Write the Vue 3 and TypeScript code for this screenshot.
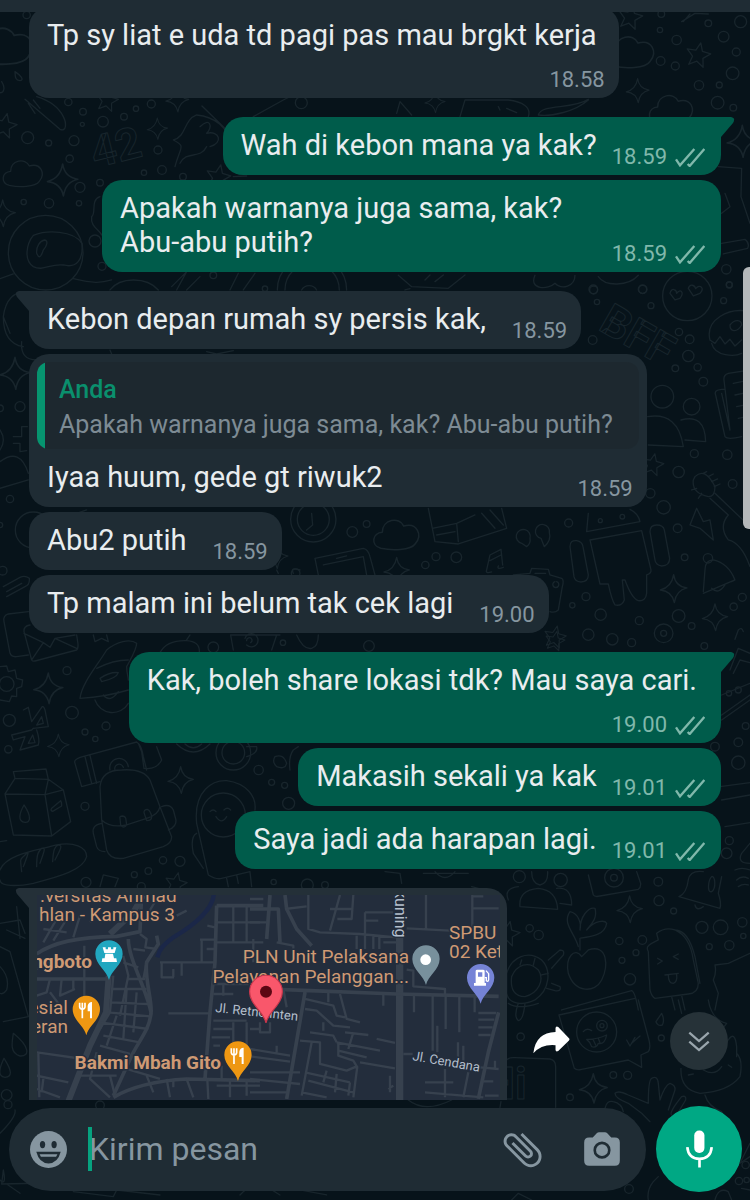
<script setup lang="ts">
import { ref } from 'vue'

interface Message {
  id: number
  out: boolean
  text: string
  time: string
  first?: boolean
  tail?: boolean
  stacked?: boolean
  wide?: boolean
  quote?: { author: string; text: string }
}

const draft = ref('')

const messages: Message[] = [
  { id: 1, out: false, text: 'Tp sy liat e uda td pagi pas mau brgkt kerja', time: '18.58', stacked: true },
  { id: 2, out: true, text: 'Wah di kebon mana ya kak?', time: '18.59', first: true, tail: true },
  { id: 3, out: true, text: 'Apakah warnanya juga sama, kak?\nAbu-abu putih?', time: '18.59', wide: true },
  { id: 4, out: false, text: 'Kebon depan rumah sy persis kak,', time: '18.59', first: true, tail: true },
  {
    id: 5,
    out: false,
    text: 'Iyaa huum, gede gt riwuk2',
    time: '18.59',
    quote: { author: 'Anda', text: 'Apakah warnanya juga sama, kak? Abu-abu putih?' },
  },
  { id: 6, out: false, text: 'Abu2 putih', time: '18.59' },
  { id: 7, out: false, text: 'Tp malam ini belum tak cek lagi', time: '19.00' },
  { id: 8, out: true, text: 'Kak, boleh share lokasi tdk? Mau saya cari.', time: '19.00', first: true, tail: true, stacked: true },
  { id: 9, out: true, text: 'Makasih sekali ya kak', time: '19.01' },
  { id: 10, out: true, text: 'Saya jadi ada harapan lagi.', time: '19.01' },
]

const pinPath = 'M0 78C-6 50-41 32-41 0a41 41 0 1 1 82 0C41 32 6 50 0 78z'
const sparkPath = 'M0-40Q5-6 38-2Q7 5 2 40Q-5 7-38 4Q-6-4 0-40z'
const starPath = 'M0-36L10-12L36-10L16 8L22 34L0 20L-22 34L-16 8L-36-10L-10-12z'
const cloudPath = 'M-44 34C-72 26-66-6-40-8C-40-42 4-50 16-24C50-34 66-2 46 22C34 40-16 40-44 34z'

interface Tile {
  x: number
  y: number
  dots: number[][]
  sparks: number[][]
  stars: number[][]
  clouds: number[][]
  lines: string[]
}

const tiles: Tile[] = [
  {
    x: 0,
    y: 0,
    dots: [[249, 335, 10], [309, 365, 16], [372, 350, 10], [408, 326, 8], [454, 312, 12], [247, 373, 6], [205, 306, 11], [83, 413, 18], [146, 429, 9], [222, 422, 15], [209, 476, 11], [474, 450, 12], [432, 518, 8], [486, 510, 13], [549, 530, 10], [240, 562, 15], [300, 548, 10], [147, 610, 14], [237, 610, 8], [71, 606, 8], [285, 723, 18], [306, 799, 12], [80, 45, 11], [904, 308, 18], [640, 826, 10], [795, 866, 8], [137, 758, 112]],
    sparks: [[188, 540, 1.2], [472, 386, 0.8], [532, 300, 0.9], [8, 640, 1]],
    stars: [[14, 376, 1], [322, 300, 0.9], [655, 530, 1]],
    clouds: [[20, 140, 1.4], [72, 522, 1]],
    lines: [
      'M100 706C140 690 220 690 246 730C250 780 230 805 190 795C150 790 130 815 100 800C70 780 80 730 100 706z',
      'M110 760C108 740 120 722 134 720C146 722 140 740 130 750C122 775 116 775 110 760z',
      'M75 298L180 388C200 396 200 370 190 350C170 310 130 296 110 290M85 310L105 340M100 300L120 325',
      'M525 500C540 440 560 440 520 420C560 410 550 360 590 345C640 350 690 380 690 440M606 318L680 390M600 380C630 350 640 380 620 400C660 390 670 430 630 440M540 490C560 450 600 480 620 440',
      'M0 836L40 822M220 836C280 850 300 850 335 840M330 870C360 830 440 830 475 870M515 860L560 815L530 870M560 870L600 830M690 870L715 820M730 870L765 820',
      'M832 870A100 100 0 0 1 1040 870M855 870A80 80 0 0 1 1018 870M905 870A26 26 0 0 1 950 870',
      'M300 590C270 600 290 640 275 650C270 680 300 690 305 705',
      'M45 215C60 225 75 240 60 242C44 240 46 228 45 215zM5 245C18 265 10 280 0 278M760 350L850 300L870 290M700 530L740 528',
    ],
  },
  {
    x: 375,
    y: 0,
    dots: [[859, 42, 10], [855, 90, 8], [905, 120, 14], [1000, 70, 10], [1097, 65, 18], [1046, 110, 16], [1084, 156, 12], [1073, 220, 19], [972, 256, 14], [1033, 255, 9], [1028, 308, 19], [1075, 323, 10], [857, 183, 13], [901, 198, 12], [1054, 808, 14], [803, 868, 13], [656, 870, 12], [1063, 855, 9], [937, 888, 74]],
    sparks: [[788, 272, 0.9], [1102, 424, 1.2], [180, 306, 0.8]],
    stars: [[766, 50, 1], [970, 164, 1]],
    clouds: [[770, 158, 1.2], [892, 330, 1.1]],
    lines: [
      'M920 65L960 40L1000 42M945 42L925 65M460 350C470 320 440 305 400 300L270 300L255 350M490 345C500 310 590 330 640 298M490 345C530 350 600 335 640 300M370 320L375 330M395 325L425 338M65 340L75 305L110 345',
      'M1030 500L1100 505L1098 590L1125 670M1040 640L1065 620L1050 580M1040 730L1110 718Q1125 730 1118 745L1045 762',
      'M70 826L110 860L220 865L270 825M90 870L105 866M150 840L165 825M180 845L205 825M480 826C460 870 520 870 540 850C560 870 600 860 600 826M670 830C690 860 760 860 790 826',
      'M885 880C890 860 905 870 905 880C915 865 930 875 915 895L900 900zM940 865C945 850 960 855 962 866C975 850 990 865 975 880L955 888z',
    ],
  },
  {
    x: 0,
    y: 280,
    dots: [[60, 380, 15], [0, 385, 10], [30, 657, 11], [0, 735, 8], [8, 872, 13], [1057, 756, 16], [1100, 732, 10], [887, 880, 13], [940, 718, 68], [940, 718, 48], [100, 750, 54]],
    sparks: [[45, 280, 1.2], [830, 830, 0.9]],
    stars: [],
    clouds: [],
    lines: [
      'M88 35Q20 30 10 110Q10 190 70 200M65 185Q60 240 110 240M10 110L30 160M0 450Q20 480 0 510M40 470L65 470L65 440L82 440M40 490L60 490L60 515L80 512M0 545Q60 500 85 580M85 600L0 625',
      'M935 700L938 735L920 750M945 835L1090 805Q1105 808 1110 830L1125 885M945 835L955 885M970 855L1090 830L1100 885M1010 835L1040 828M230 700L260 690M330 210L335 222M620 215L650 222L700 212',
    ],
  },
  {
    x: 375,
    y: 280,
    dots: [[666, 66, 8], [655, 28, 13], [803, 28, 12], [828, 77, 9], [653, 180, 13], [912, 156, 11], [944, 178, 13], [940, 228, 17], [968, 262, 11], [901, 265, 10], [985, 305, 13], [1046, 62, 9], [1063, 14, 9], [958, 521, 12], [911, 576, 17], [1057, 524, 14], [1073, 612, 13], [866, 682, 20], [908, 745, 13], [826, 640, 14], [581, 729, 12], [183, 830, 12], [151, 855, 11], [244, 832, 16], [929, 832, 10], [633, 950, 12], [677, 1004, 17], [592, 976, 8], [793, 1022, 12], [911, 1008, 19], [950, 1038, 10], [1102, 952, 12], [1076, 980, 11], [640, 1064, 17], [712, 1078, 17], [866, 1060, 28], [866, 1060, 9], [862, 350, 34], [950, 380, 25], [676, 722, 6], [742, 710, 7], [999, 835, 14]],
    sparks: [[65, 872, 1], [896, 926, 1.05], [1020, 1012, 1]],
    stars: [[833, 553, 0.9], [540, 1070, 0.9]],
    clouds: [[68, 766, 1.15]],
    lines: [
      'M1005 180C990 120 1060 80 1125 95M1005 180L1020 190L1035 170L1050 192L1065 178L1080 198L1100 180M1010 190C1020 230 1080 230 1100 220M1065 135C1080 115 1100 120 1100 135C1085 160 1065 155 1065 135z',
      'M1125 270L1060 280Q1045 285 1047 300L1065 450M1022 345Q1016 330 1040 328L1050 328M1022 345L1050 470Q1058 480 1100 470M1040 340L1065 450M1075 310L1115 302M1080 345L1115 338M1085 380L1115 374M1090 415L1115 410',
      'M818 410Q910 395 925 500L820 495M918 420Q990 400 992 485L930 480',
      'M960 590Q990 560 1020 620Q1020 650 1000 650Q950 640 955 600zM985 580L995 575M1000 590L1015 582M1010 605L1028 597M1018 620L1035 612M950 630L965 625M970 655L980 640M1020 640L1125 740M1005 655L1060 705Q1030 740 1060 780Q1100 790 1125 860',
      'M965 685L945 735L975 745L1015 780L1005 720L985 725z',
      'M985 935L990 870Q990 840 1015 840Q1060 850 1080 900L985 940M1010 925Q1030 945 1050 915M1080 900L1070 905',
      'M645 780L800 752L828 870Q830 880 815 885L815 940Q812 965 790 962Q770 955 750 900L742 900L748 960Q740 980 720 975Q710 960 700 912L675 912Z',
      'M585 800Q585 780 605 782Q622 785 624 800L640 885Q640 905 618 906Q600 905 597 890zM825 755Q825 735 845 735Q865 735 868 750L884 835Q884 858 860 858Q842 855 840 840z',
      'M635 755L640 700M635 755L795 725Q790 700 765 688',
      'M465 775A21 21 0 1 0 440 790L455 800Q468 790 465 775M523 758A21 21 0 1 0 498 775L508 800Q530 780 523 758',
      'M335 870L345 825L378 808L383 855M345 842L378 825M335 870Q330 882 350 876M370 858Q365 870 385 862',
      'M415 885L465 880L470 865L520 868L525 885L560 895Q568 900 562 920L550 990Q540 1000 525 995M480 880L512 880M545 905A9 9 0 1 1 540 905',
      'M160 685L180 785L250 792L395 745L380 685M172 745L245 730L300 705M245 730L250 785M185 765L240 755M320 700L360 745M345 690L385 735',
      'M1080 1078L1090 1050Q1100 1040 1105 1055',
    ],
  },
  {
    x: 0,
    y: 570,
    dots: [[201, 302, 12], [28, 451, 18], [216, 428, 19], [318, 468, 12], [255, 486, 9], [286, 507, 8], [25, 538, 11], [255, 709, 12], [776, 600, 14], [815, 637, 9], [854, 646, 9], [866, 700, 18], [489, 871, 11], [540, 874, 15], [445, 903, 10], [403, 914, 9], [258, 937, 15], [424, 950, 12], [821, 936, 8], [640, 232, 16], [849, 218, 8], [1107, 228, 16], [20, 342, 22], [700, 548, 34], [700, 548, 52], [670, 735, 66], [922, 945, 18], [975, 945, 10]],
    sparks: [[145, 355, 1.15], [175, 526, 0.85], [542, 630, 1]],
    stars: [[528, 940, 0.9]],
    clouds: [],
    lines: [
      'M0 290L20 288L25 305L45 300L50 325L68 330L65 350L50 355L50 380L35 378L28 395L0 390',
      'M85 125L25 132Q8 138 12 155L30 250Q35 262 50 260L85 255M72 185Q70 168 90 165M72 185L95 270Q98 275 105 273L230 240Q235 235 234 222L230 195M72 190L130 218L150 232L165 205L225 195M95 270L130 218M165 205L230 235',
      'M240 385C245 340 290 290 320 240C350 215 390 205 410 220C410 240 390 270 380 290C380 310 385 320 385 330M240 385Q320 380 385 360M290 295Q340 270 385 270M300 325Q330 305 355 308Q350 325 305 335zM285 390A55 55 0 0 0 385 400M310 375Q330 400 355 365',
      'M70 420L85 412L95 455L125 412Q130 405 135 420L145 470L100 475M125 440L110 465L130 460zM35 495L95 480L100 475M35 495L40 510L75 500L60 540L115 525Q120 510 110 480M85 520L98 495L105 518z',
      'M225 580Q220 570 240 562L410 516Q425 525 430 560L440 600M225 580L245 650L300 635M255 560L275 640M270 556L290 640M415 520L425 545L432 595Q470 600 485 570L470 530M330 600A28 28 0 1 1 385 590M345 600A12 12 0 1 1 370 592',
      'M305 750L300 650Q305 600 365 600Q430 595 450 630L480 710L515 800Q515 820 490 830L370 865Q330 870 320 840zM305 750Q330 775 380 765L440 745Q475 735 480 710M360 745Q358 738 368 738Q378 740 378 750L380 765Q372 778 362 765zM432 728Q432 718 442 718Q452 722 455 740Q455 752 440 752zM305 760Q275 765 280 790L290 830Q295 845 315 845M485 710Q510 700 520 720L528 750Q530 770 505 780',
      'M40 605L138 597L145 628L190 660L212 755L155 798L40 795L15 672L45 625L145 628M40 605L45 625M15 672L135 674L190 660M135 674L155 798M145 628L135 674M72 705C95 740 92 758 75 757C52 755 58 730 72 705zM155 715Q150 722 158 724L185 708Q186 700 182 692z',
      'M0 900C20 850 120 840 170 825C220 815 260 830 260 860C250 900 180 920 100 940C50 950 0 950 0 930M65 905C60 860 60 870 75 855C90 840 85 850 70 890M110 890C110 850 115 845 125 835C140 830 130 850 120 880M158 875C160 835 165 830 175 825C190 825 180 840 165 870',
      'M590 760C580 660 640 630 680 632C740 640 770 680 765 720M590 760L625 915Q650 930 665 925L750 905M590 790Q570 800 580 850L610 895M630 725Q640 715 648 725M672 720Q682 710 692 720M648 740Q665 765 680 740M680 925L685 950M710 915L715 940M750 905L755 950',
      'M530 522Q580 570 630 522M555 522Q580 545 605 522M740 530L770 530Q775 550 740 560M825 560Q850 550 860 580Q855 600 830 590Q815 575 825 560zM870 600Q865 560 880 540L895 530M820 195L840 195M700 240L692 195L830 195L815 240M735 205A20 20 0 1 1 740 225M740 212A8 8 0 1 1 752 218M890 195Q910 240 935 235Q955 230 955 195M480 248Q500 210 560 212Q600 215 598 245M280 195L285 215L305 205L325 215L320 195M560 210L570 195',
      'M20 80L75 50Q90 45 88 25Q75 15 60 22L10 50M20 65L65 40M300 950L310 915L355 925L345 950M0 815L20 812M880 10Q870 -10 900 0M830 0L835 10',
    ],
  },
  {
    x: 375,
    y: 640,
    dots: [[1020, 320, 13], [1090, 307, 13], [1090, 368, 20], [1063, 602, 12], [1055, 640, 16], [850, 725, 13], [852, 782, 15], [896, 813, 9], [464, 865, 11], [491, 885, 14], [733, 903, 11], [802, 900, 13], [783, 938, 9], [741, 961, 9], [765, 1018, 17], [981, 862, 18], [1037, 862, 22], [1102, 847, 14], [1003, 920, 9], [1063, 916, 14], [1105, 888, 8], [717, 713, 28], [717, 713, 10], [433, 710, 18], [557, 720, 20], [988, 18, 10], [1112, 258, 10], [1062, 160, 8], [1090, 150, 9], [770, 8, 12]],
    sparks: [[764, 808, 1]],
    stars: [[398, 880, 1], [540, 2, 0.8]],
    clouds: [],
    lines: [
      'M1040 165L1125 130M1040 240L1125 180M1040 225L1125 165M1065 90L1090 25L1125 40M1075 100L1095 60L1125 68M1040 480L1125 465M1050 560L1125 548M1035 440L1125 428',
      'M640 705L655 765Q660 772 675 768L790 748Q798 742 797 730L785 695M470 695Q470 730 495 735Q520 730 518 695M435 800Q430 750 490 745Q545 750 548 808L435 800M400 780Q385 745 430 740M545 745Q590 740 590 795L555 790',
      'M912 770Q935 760 940 720Q945 690 985 695M912 770L1035 805Q1040 790 1030 760L1040 710M960 795Q965 815 985 800M1010 710C1000 720 995 760 1010 755C1025 745 1020 705 1010 710z',
      'M610 920C600 880 560 850 585 815C610 820 620 850 615 870C615 830 640 800 660 805C670 840 640 860 635 870C660 840 690 840 695 850C690 885 650 890 615 895L615 930M620 950C600 920 570 950 580 1000C600 1060 660 1060 680 1020C700 980 700 910 640 930L620 950',
      'M395 1000C410 950 460 930 500 960C530 990 525 1050 480 1080C440 1100 400 1090 395 1060zM410 1010C425 975 460 960 490 990C510 1020 490 1060 450 1070C420 1070 405 1050 410 1010M520 960L555 930Q570 930 565 945L530 985M530 1030L555 1040Q560 1055 540 1052L515 1045M440 960L435 975M480 955L475 975M520 1000L500 1005',
      'M820 935Q810 920 830 910L850 900L845 880Q870 860 900 870Q945 890 955 960L970 1030Q970 1060 940 1062L840 1075Q830 1070 825 1050zM900 870Q940 870 960 950L975 1030M848 955L862 963L848 972M910 942L895 950L910 958M870 1005L910 1000M880 1005Q880 1030 895 1030Q908 1025 905 1003M890 1070L900 1110M920 1066L930 1110',
      'M1125 610L1100 640Q1085 670 1125 670M1080 690Q1100 680 1125 690M1085 720Q1100 705 1120 715M1090 740Q1105 730 1120 735M1125 940L1060 970L1020 975Q1025 1000 1015 1020L1030 1060L1020 1110M560 1110L770 1052Q780 1055 790 1110',
      'M180 695Q210 730 240 695M145 700L280 700M30 695L75 700L80 730M290 740L310 745',
    ],
  },
  {
    x: 375,
    y: 1000,
    dots: [[437, 110, 11], [859, 114, 9], [715, 225, 10], [758, 226, 12], [585, 292, 10], [1112, 495, 11], [1092, 543, 11], [1115, 540, 8], [762, 567, 13], [665, 96, 60], [681, 77, 16], [681, 77, 6]],
    sparks: [[655, 265, 1.1]],
    stars: [],
    clouds: [],
    lines: [
      'M552 45L780 -5M552 45L598 205Q605 212 620 208L760 180L800 202L798 165L820 155Q828 145 822 120L790 0M625 95Q635 82 650 92M635 118Q660 120 695 105Q690 135 670 130Q665 145 650 140Q645 125 635 118M655 120L662 135M670 115L675 128M755 120L765 138L780 112M770 130L795 108M860 40Q870 60 862 75Q848 80 843 65z',
      'M720 280Q730 270 760 285L820 310Q820 240 830 235Q848 225 850 250L855 300Q870 255 885 250Q902 255 900 270L880 330M720 280Q720 295 760 310L800 340L825 365M690 325Q695 300 715 305Q740 310 745 335M890 345Q880 340 920 290Q935 285 932 300L905 345',
      'M918 205Q915 270 975 280Q1060 275 1095 230Q1105 180 1085 160M1040 200Q1020 230 985 210M940 225L955 222M1060 195L1070 202M1060 120Q1080 90 1085 140L1085 170M990 285Q1000 320 1040 335L1052 365M1125 430L1095 490L1125 470M1100 565L1125 570M910 0L920 40M1000 0Q1010 60 1055 70L1040 90',
      'M395 180Q400 172 420 173L525 177Q542 180 542 200L542 322M375 322L378 305M430 10Q415 50 430 62Q445 60 450 10M400 10Q430 30 490 10M100 300Q150 340 230 300M820 600Q815 570 835 545L850 530M1020 600Q1030 560 1060 575L1070 600M410 600L430 580L470 600',
    ],
  },
  {
    x: 0,
    y: 880,
    dots: [[20, 645, 16], [24, 674, 12], [300, 676, 13]],
    sparks: [],
    stars: [],
    clouds: [],
    lines: [
      'M40 460C90 500 90 530 60 528C30 520 35 490 40 460zM12 535C38 575 36 590 15 592C-10 590 0 560 12 535z',
      'M0 200L30 215L85 410L10 425M0 130L60 120L75 160M20 150L75 175M50 80L60 175M0 260Q30 290 20 330Q10 345 0 340',
      'M0 900Q20 920 10 870L5 912L280 906M0 760Q50 710 45 690M20 912L60 940M220 935L340 950L350 930L480 945M720 945Q750 910 800 920L840 945M900 930L980 945',
    ],
  },
]
</script>

<template>
  <div class="chat">
    <svg class="wallpaper" viewBox="0 0 750 1200" preserveAspectRatio="xMidYMid slice" aria-hidden="true">
      <g v-for="(t, i) in tiles" :key="i" :transform="`translate(${t.x} ${t.y}) scale(0.3333)`">
        <circle v-for="(d, k) in t.dots" :key="'d' + k" :cx="d[0]" :cy="d[1]" :r="d[2]" />
        <path v-for="(s, k) in t.sparks" :key="'s' + k" :d="sparkPath" :transform="`translate(${s[0]} ${s[1]}) scale(${s[2]})`" />
        <path v-for="(s, k) in t.stars" :key="'t' + k" :d="starPath" :transform="`translate(${s[0]} ${s[1]}) rotate(12) scale(${s[2]})`" />
        <path v-for="(s, k) in t.clouds" :key="'c' + k" :d="cloudPath" :transform="`translate(${s[0]} ${s[1]}) scale(${s[2]})`" />
        <path v-for="(l, k) in t.lines" :key="'l' + k" :d="l" />
      </g>
      <text class="doodle-text" x="95" y="168" transform="rotate(-14 95 168)">42</text>
      <text class="doodle-text" x="597" y="329" transform="rotate(30 597 329)">BFF</text>
      <text class="doodle-text" x="484" y="1099">Hi</text>
    </svg>

    <header class="topbar"></header>

    <main class="history">
      <div class="thread">
        <div v-for="m in messages" :key="m.id" class="row" :class="{ out: m.out, first: m.first }">
          <div class="bubble" :class="{ tailed: m.tail, wide: m.wide }">
            <svg v-if="m.tail" class="tail" viewBox="0 0 14 20" aria-hidden="true">
              <path d="M0 0H10Q15 1 12 6L0 20z" />
            </svg>
            <blockquote v-if="m.quote" class="quote">
              <strong>{{ m.quote.author }}</strong>
              <p>{{ m.quote.text }}</p>
            </blockquote>
            <div class="body" :class="{ stacked: m.stacked }">
              <p class="text">{{ m.text }}</p>
              <span class="meta">
                <time>{{ m.time }}</time>
                <svg v-if="m.out" class="ticks" viewBox="899 435 90 57" role="img" aria-label="Terkirim">
                  <path d="M902 469L914 487L957 438M937 483L943 489L987 438" />
                </svg>
              </span>
            </div>
          </div>
        </div>

        <div class="row first">
          <div class="bubble tailed location">
            <svg class="tail" viewBox="0 0 14 20" aria-hidden="true">
              <path d="M0 0H10Q15 1 12 6L0 20z" />
            </svg>
            <svg class="map" viewBox="37 896 463 290" preserveAspectRatio="xMinYMin slice" role="img" aria-label="Peta lokasi">
              <rect x="37" y="896" width="463" height="290" fill="#232d3c" />
              <g transform="translate(0 880) scale(0.3333)" class="roads">
                <path class="river" d="M642 40C642 90 580 140 520 175C495 195 480 205 472 235" />
                <path class="wide" d="M326 290L318 400L270 500L200 680M330 165L400 100L430 48" />
                <path class="mid" d="M110 225C160 190 230 175 350 172L420 158L425 48M110 300L322 300M385 180C385 240 440 330 453 400C450 450 420 480 395 530L340 650M470 170L475 195L440 250C432 300 462 380 452 410M340 655C400 620 470 605 560 600L780 605M650 80L645 250L630 400L615 600M650 80H790" />
                <path d="M170 120L130 190M200 120L160 185M130 150L200 160M240 110L220 175M300 90L270 130M150 300L140 340L110 350M150 340L180 380M185 300L180 350L225 330M253 200V380M220 300V330M110 270L150 245M420 165L440 180L436 205L470 210M400 210L435 215M370 250L415 265M380 300L435 300M340 290L330 400L300 450M370 230L385 290L360 410M335 330L440 330M330 370L445 375M325 400L450 412M300 430L445 450M310 470L420 490M300 500L390 525M410 340L400 460M380 330L370 480M350 410L320 500M440 250L430 300M110 520L250 540M115 520L118 655M110 590L205 610M110 630L180 655M130 600L125 640M290 520L270 600L330 655M240 590L350 590M330 590L345 650M380 570L480 600M440 590L460 640M500 600L510 655M560 600L580 655M622 600L625 660M665 560V600M480 250H645M485 250V295H522M520 270V295M545 250V290M622 140L645 145M600 182H650M605 182V250M620 210H645M700 80V190M740 80V190M645 190H790M645 130H780M505 403H635M635 315H790M670 315V350M640 345H700M640 425H740M640 450H700M635 475H690M700 430V490M740 430V500M640 500H660M760 180V250M520 600V625M440 110L470 60M530 110L560 95M650 620H780M690 605V655M740 605V650" />
              </g>
              <g transform="translate(250 880) scale(0.3333)" class="roads">
                <path class="main" d="M449 175V680" />
                <path class="mid" d="M0 328L180 335L440 345L746 352M165 340L110 660M0 90H85L90 190M60 48L50 180M105 48L110 90L140 150L185 200M746 400L715 520L685 660" />
                <path d="M105 90L170 82M175 48V150L210 160L330 165L440 175M270 48L240 155M310 48L305 120H262M240 90H310M345 100H430M345 100V210M345 125H385M320 170V210M370 170V210M388 170V210M400 190H440M470 148L600 155M528 48V150M667 48V150M667 88H746M667 52H700M600 155L610 165M0 60H40M0 130H50M80 190L130 200V230M470 272L490 275V322L585 330V350M492 350V400M548 350V515M562 440V520M587 350V450M628 350V460M674 350V400M624 490V540M640 500V545M685 402H738M685 422H733M685 445H728M685 468H722M400 345V380M460 525H488M690 565L746 570M735 545V570M525 640L700 655M525 610H610M585 570V655M655 580L640 655M700 607H730M705 650H746M270 345L290 420L330 430M165 360L250 380L260 410L285 415M165 390L200 395L250 440L300 445M220 430V455M180 460L250 470L260 490M285 460L355 468M380 480L435 492M150 485L210 490V555L290 575L320 562M260 490L390 515M265 515L350 535M310 460L295 510M265 490V530L310 545L322 565M330 550L435 568M0 510L120 530M0 532L120 548M185 490L155 650M165 580L300 610M175 605L310 640M155 640L230 655M322 562L310 655M230 575L220 610M260 585L255 640M0 600L150 615M0 580H150M0 640H110M420 590V640M430 620L415 630M30 430V460H60V430M0 450H30M80 500V520M300 610L295 650M100 330L110 385M235 340V370" />
              </g>

              <g class="labels">
                <text x="40" y="903">.versitas Ahmad</text>
                <text x="39" y="922">hlan - Kampus 3</text>
                <text x="92" y="969" class="strong end">ngboto</text>
                <text x="68" y="1015" class="end">esial</text>
                <text x="68" y="1034" class="end">eran</text>
                <text x="221" y="1070" class="strong end">Bakmi Mbah Gito</text>
                <text x="409" y="964" class="end">PLN Unit Pelaksana</text>
                <text x="409" y="984" class="end">Pelayanan Pelanggan...</text>
                <text x="449" y="940">SPBU</text>
                <text x="449" y="959">02 Ket</text>
                <text x="215" y="1013" class="street" transform="rotate(6 215 1013)">Jl. Retno Inten</text>
                <text x="412" y="1061" class="street" transform="rotate(10 412 1061)">Jl. Cendana</text>
                <text x="395" y="891" class="street tall" transform="rotate(90 395 891)">kuning</text>
              </g>

              <g transform="translate(0 880) scale(0.3333)">
                <path :d="pinPath" transform="translate(327 225)" fill="#21a7c0" />
                <path fill="#fff" d="M308 205h9v6h7v-6h9v6h7v-6h9l-5 17h-31zM316 224h23l3 14h7l2 11h-46l2-11h7z" />
                <g v-for="p in [[259, 391], [714, 528]]" :key="p[0]" :transform="`translate(${p[0]} ${p[1]})`">
                  <path :d="pinPath" fill="#ee9712" />
                  <path fill="none" stroke="#fff" stroke-width="5" d="M-20-20V-7Q-19 0-12 0Q-5 0-4-7V-20M-12-20V27" />
                  <path fill="#fff" d="M4-10Q6-22 17-22V27H11V6H4z" />
                </g>
              </g>
              <g transform="translate(250 880) scale(0.3333)">
                <path :d="pinPath" transform="translate(528 240)" fill="#78909c" />
                <circle cx="527" cy="242" r="16" fill="#fff" />
                <path :d="pinPath" transform="translate(692 296)" fill="#7583d6" />
                <path fill="#fff" fill-rule="evenodd" d="M677 276Q677 272 682 272H699Q704 272 704 276V312H708V320H672V312H677zM684 280V293H697V280z" />
                <path fill="none" stroke="#fff" stroke-width="4" d="M704 296H709V305Q715 310 716 302V284L708 275" />
                <path :d="pinPath" transform="translate(48 338) scale(1.2)" fill="#f9576b" stroke="#c8374c" stroke-width="3" />
                <circle cx="48" cy="338" r="18" fill="#5c0713" />
              </g>
            </svg>
          </div>
          <button class="forward" type="button" aria-label="Teruskan">
            <svg viewBox="474 81 110 83" aria-hidden="true">
              <path d="M475 162Q482 100 541 99V87Q542 80 549 84L581 117Q584 120 581 124L549 155Q542 159 541 152V138Q500 134 475 162z" />
            </svg>
          </button>
        </div>
      </div>
    </main>

    <div class="scroll-thumb"></div>
    <button class="jump" type="button" aria-label="Ke pesan terbaru">
      <svg viewBox="935 98 74 68" aria-hidden="true"><path d="M942 106L972 132L1002 106M942 134L972 160L1002 134" /></svg>
    </button>

    <form class="composer" @submit.prevent>
      <div class="field">
        <button class="icon" type="button" aria-label="Emoji">
          <svg class="smile" viewBox="90 105 112 112" aria-hidden="true">
            <circle cx="146" cy="161" r="56" fill="#8696a0" />
            <ellipse cx="128" cy="146" rx="8" ry="11" fill="#1f2c34" />
            <ellipse cx="163" cy="146" rx="8" ry="11" fill="#1f2c34" />
            <path fill="#1f2c34" d="M109 168H183Q174 203 146 203Q118 203 109 168z" />
            <path fill="#8696a0" d="M119 175H173L169 183H123z" />
          </svg>
        </button>
        <div class="entry">
          <span class="caret"></span>
          <input v-model="draft" type="text" placeholder="Kirim pesan" aria-label="Kirim pesan" />
        </div>
        <button class="icon" type="button" aria-label="Lampirkan">
          <svg class="clip" viewBox="0 0 24 24" aria-hidden="true">
            <path transform="rotate(-45 12 12)" fill="#8696a0" d="M16.5 6v11.5c0 2.2-1.8 4-4 4s-4-1.8-4-4V5a2.5 2.5 0 0 1 5 0v10.5c0 .55-.45 1-1 1s-1-.45-1-1V6H10v9.5a2.5 2.5 0 0 0 5 0V5c0-2.2-1.8-4-4-4S7 2.800 7 5v12.500c0 3 2.500 5.500 5.500 5.500s5.500-2.500 5.500-5.500V6z" />
          </svg>
        </button>
        <button class="icon camera-btn" type="button" aria-label="Kamera">
          <svg class="camera" viewBox="630 392 108 103" aria-hidden="true">
            <path fill="#8696a0" d="M645 409H656L668 396Q671 393 675 393H693Q697 393 700 396L712 409H723Q738 409 738 424V479Q738 494 723 494H645Q630 494 630 479V424Q630 409 645 409z" />
            <circle cx="684" cy="447" r="22" fill="none" stroke="#1f2c34" stroke-width="8" />
          </svg>
        </button>
      </div>
      <button class="mic" type="button" aria-label="Rekam suara">
        <svg viewBox="931 390 82 114" aria-hidden="true">
          <rect x="956" y="391" width="31" height="68" rx="15" fill="#fff" />
          <path fill="none" stroke="#fff" stroke-width="8" d="M935 441Q938 476 972 477Q1006 476 1009 441M972 477V503" />
        </svg>
      </button>
    </form>
  </div>
</template>

<style>
body {
  background: #07131a;
}
</style>

<style scoped>
.chat {
  position: relative;
  display: flex;
  flex-direction: column;
  height: 100vh;
  overflow: hidden;
  background: #07131a;
  color: #e9edef;
  font-family: Roboto, "Liberation Sans", sans-serif;
}

button {
  border: 0;
  padding: 0;
  background: none;
  cursor: pointer;
}

svg {
  display: block;
}

p,
blockquote {
  margin: 0;
}

.wallpaper {
  position: absolute;
  inset: 0;
  width: 100%;
  height: 100%;
  fill: none;
  stroke: #18252c;
  stroke-width: 4;
  stroke-linejoin: round;
  stroke-linecap: round;
}

.doodle-text {
  font-size: 44px;
  font-weight: 700;
  stroke-width: 1;
}

.topbar {
  position: relative;
  z-index: 1;
  flex: none;
  height: 12px;
  background: #1f2c34;
}

.history {
  position: relative;
  flex: 1;
  min-height: 0;
  overflow: hidden;
}

.thread {
  display: flex;
  flex-direction: column;
  gap: 5px;
  margin-top: -5px;
  padding: 0 29px;
}

.row {
  display: flex;
}

.row.out {
  justify-content: flex-end;
}

.row.first {
  margin-top: 14px;
}

.bubble {
  position: relative;
  border-radius: 20px;
  background: #1f2c34;
}

.bubble.wide {
  width: 619px;
}

.out .bubble {
  background: #005c4b;
}

.bubble.tailed {
  border-top-left-radius: 0;
}

.out .bubble.tailed {
  border-radius: 20px 0 20px 20px;
}

.tail {
  position: absolute;
  top: 0;
  right: 100%;
  width: 14px;
  height: 20px;
  fill: #1f2c34;
  transform: scaleX(-1);
}

.out .tail {
  right: auto;
  left: 100%;
  fill: #005c4b;
  transform: none;
}

.body {
  display: flex;
  align-items: flex-end;
  justify-content: space-between;
  gap: 26px;
  padding: 11px 14px 13px 18px;
}

.out .body {
  gap: 15px;
  padding-right: 16px;
}

.text {
  font-size: 29px;
  line-height: 34px;
  white-space: pre-line;
}

.meta {
  display: flex;
  align-items: center;
  gap: 8px;
  margin-bottom: -8px;
  color: #8696a0;
  font-size: 22px;
  line-height: 26px;
}

.out .meta {
  color: #80b8ab;
}

.ticks {
  width: 30px;
  height: 19px;
  fill: none;
  stroke: #80b8ab;
  stroke-width: 7;
}

.body.stacked,
.out .body.stacked {
  flex-direction: column;
  align-items: stretch;
  gap: 15px;
}

.stacked .text {
  padding-right: 8px;
}

.stacked .meta {
  align-self: flex-end;
}

.quote {
  display: flex;
  flex-direction: column;
  margin: 8px 8px 0;
  padding: 10px 26px 7px 22px;
  border-radius: 12px;
  background: linear-gradient(to right, #06946f 8px, #1d282f 8px);
  color: #7d8b94;
  font-size: 25px;
  line-height: 35px;
}

.quote strong {
  color: #0a8f6d;
  font-weight: 500;
}

.bubble.location {
  box-sizing: border-box;
  width: 478px;
  min-height: 304px;
  padding: 7px 7px 7px 8px;
  background: #243038;
}

.location .tail {
  fill: #243038;
}

.map {
  width: 100%;
  height: 290px;
}

.roads {
  fill: none;
  stroke: #37414e;
  stroke-width: 7;
  stroke-linejoin: round;
}

.roads .mid {
  stroke-width: 11;
}

.roads .wide {
  stroke-width: 18;
}

.roads .main {
  stroke-width: 22;
}

.roads .river {
  stroke: #1b2748;
  stroke-width: 13;
}

.labels {
  fill: #cf9a74;
  stroke: #232d3c;
  stroke-width: 3;
  paint-order: stroke;
  font-size: 19px;
}

.labels .strong {
  font-weight: 700;
}

.labels .end {
  text-anchor: end;
}

.labels .street {
  fill: #b4bfcc;
  font-size: 13px;
}

.labels .tall {
  font-size: 16px;
}

.forward {
  align-self: center;
  margin-left: 26px;
}

.forward svg {
  width: 37px;
  height: 28px;
  fill: #fff;
}

.scroll-thumb {
  position: absolute;
  top: 267px;
  right: 0;
  width: 7px;
  height: 262px;
  border-radius: 6px 0 0 6px;
  background: #b4b8ba;
}

.jump {
  position: absolute;
  right: 22px;
  bottom: 130px;
  display: grid;
  place-items: center;
  width: 58px;
  height: 58px;
  border-radius: 50%;
  background: #263238;
}

.jump svg {
  width: 24px;
  height: 22px;
  fill: none;
  stroke: #9aa6ad;
  stroke-width: 7;
}

.composer {
  position: relative;
  flex: none;
  display: flex;
  align-items: center;
  gap: 10px;
  padding: 6px 8px 8px 9px;
}

.field {
  display: flex;
  flex: 1;
  align-items: center;
  min-width: 0;
  height: 83px;
  padding: 0 26px 0 21px;
  box-sizing: border-box;
  border-radius: 42px;
  background: #1f2c34;
}

.icon {
  flex: none;
}

.smile {
  width: 37px;
  height: 37px;
}

.entry {
  position: relative;
  display: flex;
  flex: 1;
  min-width: 0;
  margin-left: 22px;
}

.entry input {
  flex: 1;
  min-width: 0;
  border: 0;
  outline: 0;
  padding: 0;
  background: transparent;
  color: #e9edef;
  font-family: inherit;
  font-size: 32px;
  line-height: 44px;
}

.entry input::placeholder {
  color: #8696a0;
  opacity: 1;
}

.caret {
  position: absolute;
  top: 0;
  left: -1px;
  width: 4px;
  height: 100%;
  background: #06a27f;
}

.clip {
  width: 47px;
  height: 47px;
}

.camera-btn {
  margin-left: 38px;
}

.camera {
  width: 36px;
  height: 34px;
}

.mic {
  display: grid;
  flex: none;
  place-items: center;
  width: 86px;
  height: 86px;
  border-radius: 50%;
  background: #00a884;
}

.mic svg {
  width: 27px;
  height: 38px;
}
</style>
